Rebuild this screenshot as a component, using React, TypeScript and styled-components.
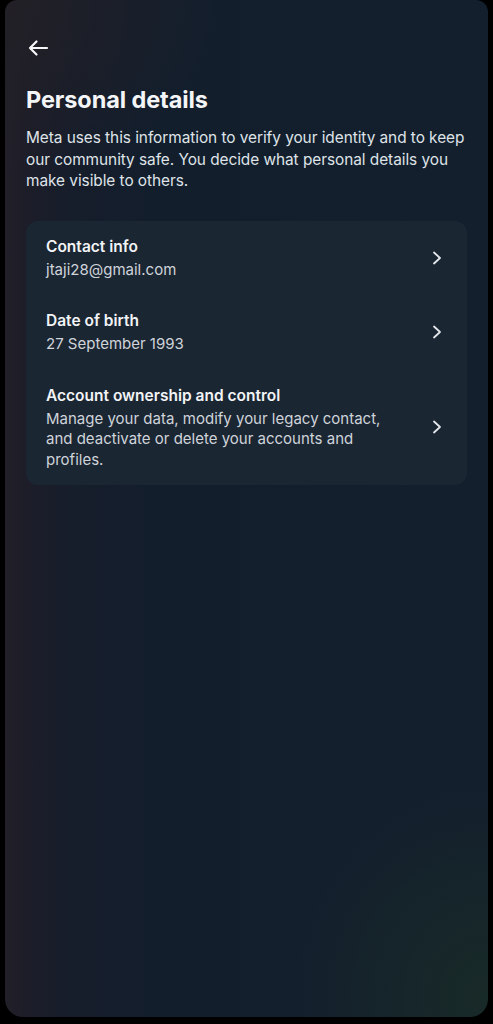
import React from "react";
import styled, { createGlobalStyle } from "styled-components";

const GlobalStyle = createGlobalStyle`
  html, body {
    margin: 0;
    padding: 0;
    background: #000;
  }
  body {
    font-family: Inter, "Noto Sans", sans-serif;
    -webkit-font-smoothing: antialiased;
  }
`;

const Screen = styled.div`
  width: 493px;
  height: 1024px;
  padding: 0 5px 7px 5px;
  box-sizing: border-box;
  background: #000;
`;

const Panel = styled.div`
  height: 100%;
  border-radius: 12px 12px 18px 18px;
  background:
    radial-gradient(ellipse 55% 22% at 0% 0%, rgba(34, 32, 38, 0.9), transparent 80%),
    radial-gradient(ellipse 55% 28% at 100% 98%, rgba(26, 46, 38, 0.75), transparent 75%),
    linear-gradient(90deg, #221f28 0%, #1c1d29 5%, #161d2b 14%, #131e2c 30%, #131f2d 100%);
  padding: 34px 21px 0 21px;
  box-sizing: border-box;
  color: #f2f4f6;
`;

const BackButton = styled.button`
  all: unset;
  display: flex;
  width: 24px;
  height: 28px;
  align-items: center;
  cursor: pointer;
  margin-left: 1px;
`;

const Title = styled.h1`
  margin: 23px 0 0 0;
  font-size: 23.5px;
  line-height: 30px;
  font-weight: 700;
  letter-spacing: -0.1px;
  color: #f4f5f7;
`;

const Intro = styled.p`
  margin: 12px 0 0 0;
  font-size: 15.4px;
  line-height: 21.5px;
  color: #dfe3e8;
  letter-spacing: -0.05px;
`;

const Card = styled.div`
  margin-top: 29px;
  background: #1b2633;
  border-radius: 12px;
  padding: 15px 0 15px 0;
  display: flex;
  flex-direction: column;
`;

const Row = styled.div`
  display: flex;
  align-items: center;
  padding: 0 20px;
  & + & {
    margin-top: 30px;
  }
`;

const RowText = styled.div`
  flex: 1;
  display: flex;
  flex-direction: column;
  gap: 3px;
  padding-right: 40px;
`;

const RowTitle = styled.div`
  font-size: 15.5px;
  line-height: 21px;
  font-weight: 600;
  color: #f2f4f6;
`;

const RowSub = styled.div`
  font-size: 15px;
  line-height: 20.5px;
  color: #cfd4da;
`;

const Chevron = styled.svg`
  flex: none;
  width: 14px;
  height: 16px;
  margin-right: 3px;
`;

const ChevronIcon = () => (
  <Chevron viewBox="0 0 14 16" fill="none">
    <path d="M4 2.5 L10 8 L4 13.5" stroke="#e4e7eb" strokeWidth="1.8" strokeLinecap="round" strokeLinejoin="round" />
  </Chevron>
);

const rows = [
  { title: "Contact info", sub: "jtaji28@gmail.com" },
  { title: "Date of birth", sub: "27 September 1993" },
  {
    title: "Account ownership and control",
    sub: "Manage your data, modify your legacy contact, and deactivate or delete your accounts and profiles.",
  },
];

export default function App() {
  return (
    <>
      <GlobalStyle />
      <Screen>
        <Panel>
          <BackButton aria-label="Back">
            <svg width="22" height="18" viewBox="0 0 22 18" fill="none">
              <path d="M20 9 H3 M9.5 2.5 L3 9 L9.5 15.5" stroke="#f5f6f8" strokeWidth="2.2" strokeLinecap="round" strokeLinejoin="round" />
            </svg>
          </BackButton>
          <Title>Personal details</Title>
          <Intro>
            Meta uses this information to verify your identity and to keep our community safe. You decide what personal
            details you make visible to others.
          </Intro>
          <Card>
            {rows.map((r) => (
              <Row key={r.title}>
                <RowText>
                  <RowTitle>{r.title}</RowTitle>
                  <RowSub>{r.sub}</RowSub>
                </RowText>
                <ChevronIcon />
              </Row>
            ))}
          </Card>
        </Panel>
      </Screen>
    </>
  );
}
